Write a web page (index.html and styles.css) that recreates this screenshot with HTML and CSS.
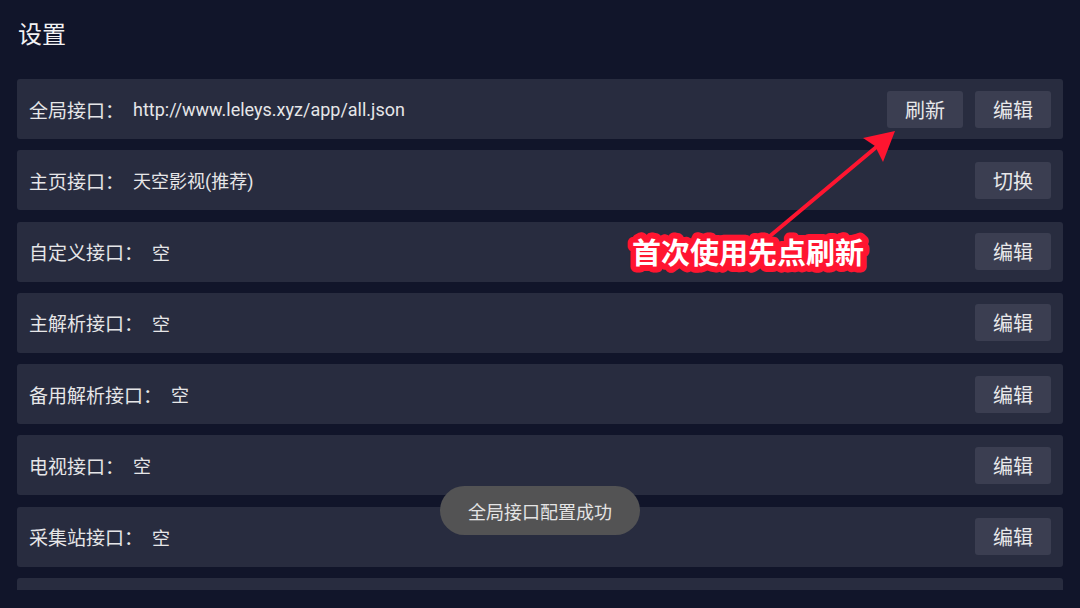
FILE: index.html
```html
<!DOCTYPE html>
<html lang="zh-CN">
<head>
<meta charset="utf-8">
<title>设置</title>
<link rel="stylesheet" href="styles.css">
</head>
<body>
<div class="page">
  <header class="header">
    <h1 class="title">设置</h1>
  </header>
  <div class="list">
    <div class="row">
      <span class="label">全局接口：</span><span class="value">http://www.leleys.xyz/app/all.json</span>
      <div class="actions"><button class="btn">刷新</button><button class="btn">编辑</button></div>
    </div>
    <div class="row">
      <span class="label">主页接口：</span><span class="value">天空影视(推荐)</span>
      <div class="actions"><button class="btn">切换</button></div>
    </div>
    <div class="row">
      <span class="label">自定义接口：</span><span class="value">空</span>
      <div class="actions"><button class="btn">编辑</button></div>
    </div>
    <div class="row">
      <span class="label">主解析接口：</span><span class="value">空</span>
      <div class="actions"><button class="btn">编辑</button></div>
    </div>
    <div class="row">
      <span class="label">备用解析接口：</span><span class="value">空</span>
      <div class="actions"><button class="btn">编辑</button></div>
    </div>
    <div class="row">
      <span class="label">电视接口：</span><span class="value">空</span>
      <div class="actions"><button class="btn">编辑</button></div>
    </div>
    <div class="row">
      <span class="label">采集站接口：</span><span class="value">空</span>
      <div class="actions"><button class="btn">编辑</button></div>
    </div>
    <div class="row">
      <div class="actions"><div class="btn"></div></div>
    </div>
  </div>
</div>

<div class="toast">全局接口配置成功</div>

<svg class="callout" width="1080" height="608" viewBox="0 0 1080 608">
  <line x1="770" y1="236" x2="880" y2="144" stroke="#ff1530" stroke-width="4" stroke-linecap="round"/>
  <polygon points="895,131 863,138 875,146 883,162" fill="#ff1530"/>
  <text x="632" y="264" class="callout-text">首次使用先点刷新</text>
</svg>
</body>
</html>
```

FILE: styles.css
```css
html, body {
  margin: 0;
  padding: 0;
  background: #11152a;
  width: 1080px;
  height: 608px;
  overflow: hidden;
}

body {
  position: relative;
  font-family: Roboto, "Noto Sans CJK SC", sans-serif;
  color: #e6e6e8;
}

.page {
  display: flex;
  flex-direction: column;
  gap: 11px;
  padding: 0 17px;
  height: 590px;
}

.header {
  height: 68px;
  display: flex;
  align-items: center;
}

.title {
  margin: 0 0 3px;
  padding-left: 1px;
  font-family: "Noto Sans CJK SC", sans-serif;
  font-size: 24px;
  font-weight: 400;
  color: #f2f2f4;
}

.list {
  flex: 1;
  overflow: hidden;
  display: flex;
  flex-direction: column;
  gap: 11.3px;
}

.row {
  flex: 0 0 60px;
  display: flex;
  align-items: center;
  background: #282c3f;
  border-radius: 3px;
  padding: 0 12px;
}

.label {
  font-family: "Noto Sans CJK SC", sans-serif;
  font-size: 19px;
}

.value {
  margin-left: 9px;
  font-size: 18px;
}

.actions {
  margin-left: auto;
  display: flex;
  gap: 12px;
}

.btn {
  width: 76px;
  height: 37px;
  border: none;
  border-radius: 3px;
  background: #3b3e51;
  color: #e8e8ea;
  font-family: "Noto Sans CJK SC", sans-serif;
  font-size: 20px;
  padding: 0;
}

.toast {
  position: absolute;
  left: 440px;
  top: 486px;
  width: 200px;
  height: 49px;
  border-radius: 25px;
  background: #535354;
  color: #e4e4e4;
  font-family: "Noto Sans CJK SC", sans-serif;
  font-size: 18px;
  display: flex;
  align-items: center;
  justify-content: center;
}

.callout {
  position: absolute;
  left: 0;
  top: 0;
}

.callout-text {
  font-family: "Noto Sans CJK SC", sans-serif;
  font-weight: 700;
  font-size: 29px;
  fill: #ffffff;
  stroke: #ff1530;
  stroke-width: 12px;
  stroke-linejoin: round;
  paint-order: stroke fill;
}
```
